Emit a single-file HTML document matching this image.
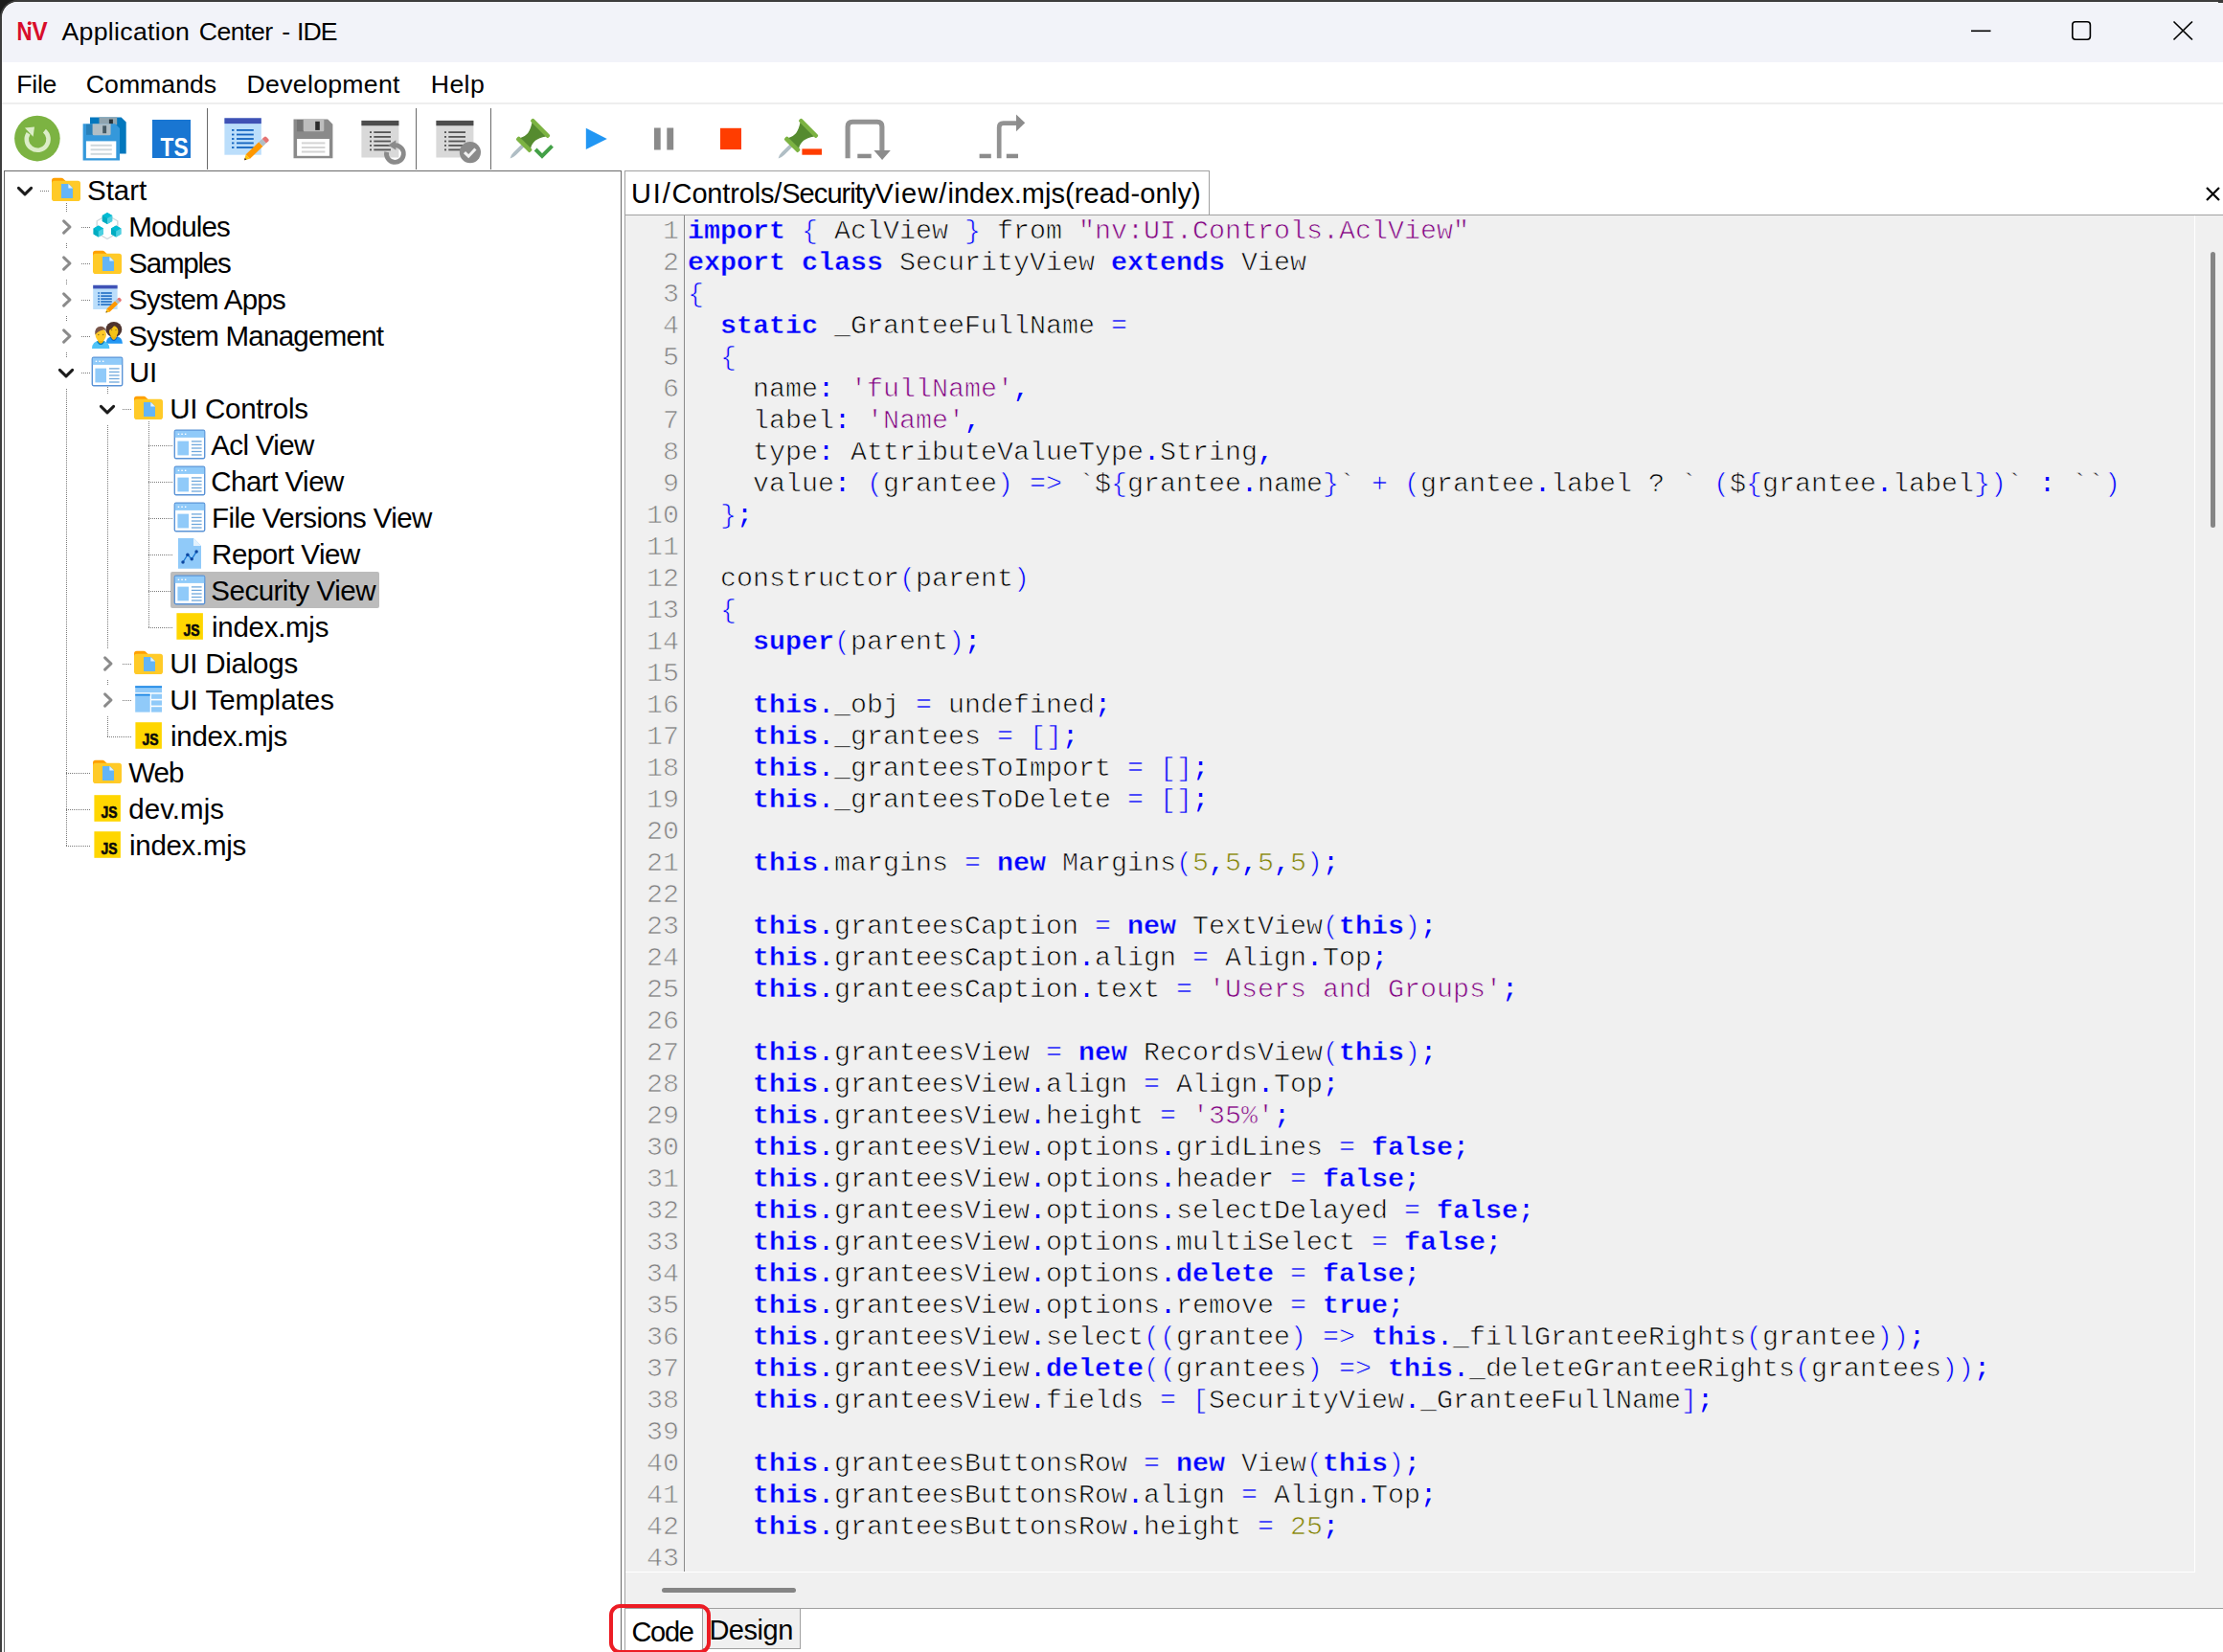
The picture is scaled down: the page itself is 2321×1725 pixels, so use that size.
<!DOCTYPE html>
<html lang="en"><head><meta charset="utf-8"><title>Application Center - IDE</title>
<style>
*{box-sizing:border-box;margin:0;padding:0}
html,body{width:2321px;height:1725px;overflow:hidden;background:#3a3a3a}
body{position:relative;font-family:"Liberation Sans",sans-serif;color:#000}
.a{position:absolute}
.t{position:absolute;white-space:pre;line-height:1}
svg{position:absolute;overflow:visible}
.tl{position:absolute;white-space:pre;font-size:29.5px;line-height:38px;height:38px}
.ln{position:absolute;left:654px;width:54.9px;text-align:right;-webkit-text-stroke:0.7px #f0f0f0;font-family:"Liberation Mono",monospace;font-size:28.33px;line-height:33px;height:33px;color:#808080;white-space:pre}
.cl{position:absolute;left:718px;-webkit-text-stroke:0.7px #f0f0f0;font-family:"Liberation Mono",monospace;font-size:28.33px;line-height:33px;height:33px;white-space:pre;color:#000}
.k{color:#0000ff;font-weight:bold;-webkit-text-stroke:0.35px #f0f0f0}
.p{color:#0000ff}
.d{color:#0000ff;-webkit-text-stroke:0}
.s{color:#800080}
.n{color:#808000}
</style></head><body>
<div class="a" style="left:0;top:0;width:24px;height:24px;background:#1c1c1c"></div>
<div class="a" style="left:0;top:0;width:2321px;height:1725px;background:#3d3d3d;border-top-left-radius:18.5px"></div>
<div class="a" style="left:2px;top:2.2px;width:2319px;height:1723px;background:#fff;border-top-left-radius:16.5px"></div>
<div class="a" style="left:2px;top:2.2px;width:2319px;height:62.8px;background:#f2f3f9;border-top-left-radius:16.5px"></div>
<div class="a" style="left:2316px;top:0;width:5px;height:3px;background:#3a3a3a"></div>
<svg style="left:14px;top:16px" width="40" height="32" viewBox="14 16 40 32"><g font-family="Liberation Sans, sans-serif" font-weight="bold" font-size="27.4" fill="#d80d2b"><text x="17.6" y="41.5" textLength="16" lengthAdjust="spacingAndGlyphs">N</text><rect x="28.4" y="19" width="6" height="9" fill="#f2f3f9"/><circle cx="30.8" cy="24.2" r="2.0"/><text x="33.2" y="41.5" textLength="16.4" lengthAdjust="spacingAndGlyphs">V</text></g></svg>
<div class="t" style="left:64.50px;top:20.4px;font-size:26.67px;letter-spacing:0.303px">Application</div>
<div class="t" style="left:207.70px;top:20.4px;font-size:26.67px;letter-spacing:-0.527px">Center</div>
<div class="t" style="left:294.20px;top:20.4px;font-size:26.67px;letter-spacing:0.000px">-</div>
<div class="t" style="left:310.02px;top:20.4px;font-size:26.67px;letter-spacing:-0.900px">IDE</div>
<svg style="left:2040px;top:10px" width="270" height="46" viewBox="2040 10 270 46" fill="none" stroke="#000" stroke-width="1.6"><path d="M2058 32.3h20.5"/><rect x="2163.8" y="22.8" width="18.6" height="18.4" rx="3.2"/><path d="M2269.5 22.5l19.5 19M2289 22.5l-19.5 19"/></svg>
<div class="t" style="left:17.3px;top:75.3px;font-size:26.67px;letter-spacing:-0.269px">File</div>
<div class="t" style="left:89.8px;top:75.3px;font-size:26.67px;letter-spacing:0.005px">Commands</div>
<div class="t" style="left:257.5px;top:75.3px;font-size:26.67px;letter-spacing:0.296px">Development</div>
<div class="t" style="left:449.8px;top:75.3px;font-size:26.67px;letter-spacing:0.362px">Help</div>
<div class="a" style="left:2px;top:107px;width:2319px;height:2px;background:#eeeeee"></div>
<div class="a" style="left:216px;top:113px;width:1px;height:64px;background:#6a6a6a"></div>
<div class="a" style="left:434px;top:113px;width:1px;height:64px;background:#6a6a6a"></div>
<div class="a" style="left:512px;top:113px;width:1px;height:64px;background:#6a6a6a"></div>
<svg style="left:0;top:108px" width="1100" height="72" viewBox="0 108 1100 72"><circle cx="38.9" cy="144.6" r="23.8" fill="#7cb342"/><path d="M46.4 136.6A11.4 11.4 0 1 1 29.6 139.2" fill="none" stroke="#dcedc8" stroke-width="4.6"/><path d="M25.9 133.6L36 132.5L34.6 142.8Z" fill="#dcedc8"/><path d="M94 122.4H126.6L131.7 127.5V160.5H94Z" fill="#0277bd"/><rect x="103.5" y="122.4" width="18.7" height="8" fill="#90a4ae"/><rect x="113.9" y="124.6" width="4" height="5" fill="#263238"/><path d="M86.6 129.3H120.2L125 134.1V167.4H86.6Z" fill="#3498db"/><rect x="90" y="129.8" width="7" height="11" fill="#2980b9"/><path d="M96.6 129.3H115.6V139.7Q115.6 141.2 114.1 141.2H98.1Q96.6 141.2 96.6 139.7Z" fill="#b0bec5"/><rect x="107.2" y="131.3" width="3.9" height="7.9" fill="#455a64"/><rect x="89.9" y="147.4" width="31.4" height="17.8" fill="#fff"/><rect x="94.6" y="150.8" width="22.2" height="2" fill="#cfd8dc"/><rect x="94.6" y="155.3" width="22.2" height="2" fill="#cfd8dc"/><rect x="94.6" y="159.8" width="22.2" height="2" fill="#cfd8dc"/><rect x="159" y="125" width="40" height="40" fill="#1976d2"/><text x="167.6" y="163" font-family="Liberation Sans, sans-serif" font-weight="bold" font-size="27.5" fill="#fff" textLength="29" lengthAdjust="spacingAndGlyphs">TS</text><rect x="234.4" y="123.3" width="38.4" height="38.4" fill="#bbdefb"/><rect x="234.4" y="123.3" width="38.4" height="5.8" fill="#3f51b5"/><rect x="242" y="135.0" width="2.4" height="1.8" fill="#1565c0"/><rect x="247" y="135.0" width="17.8" height="1.8" fill="#1565c0"/><rect x="242" y="139.6" width="2.4" height="1.8" fill="#1565c0"/><rect x="247" y="139.6" width="17.8" height="1.8" fill="#1565c0"/><rect x="242" y="144.1" width="2.4" height="1.8" fill="#1565c0"/><rect x="247" y="144.1" width="17.8" height="1.8" fill="#1565c0"/><rect x="242" y="148.5" width="2.4" height="1.8" fill="#1565c0"/><rect x="247" y="148.5" width="17.8" height="1.8" fill="#1565c0"/><rect x="242" y="153.1" width="2.4" height="1.8" fill="#1565c0"/><rect x="247" y="153.1" width="17.8" height="1.8" fill="#1565c0"/><g transform="translate(255,167.3) rotate(-43.79)"><path d="M0 0L5.36 -3.1V3.1Z" fill="#ffc107"/><path d="M0 0L2.25 -1.30V1.30Z" fill="#4e342e"/><rect x="5.36" y="-3.1" width="18.77" height="6.2" fill="#ff9800"/><rect x="24.14" y="-3.1" width="4.69" height="6.2" fill="#b0bec5"/><path d="M28.83 -3.1H32.02Q33.52 -3.1 33.52 -1.6V1.6Q33.52 3.1 32.02 3.1H28.83Z" fill="#e57373"/></g><path d="M306.5 124.5H342.2L347.4 129.7V165.2H306.5Z" fill="#8a8a8a"/><rect x="310" y="125" width="7" height="12.3" fill="#757575"/><path d="M316.7 124.5H338.3V135.8Q338.3 137.3 336.8 137.3H318.2Q316.7 137.3 316.7 135.8Z" fill="#bdbdbd"/><rect x="329.2" y="126.8" width="4.6" height="9.1" fill="#2b2b2b"/><rect x="310.1" y="145" width="33.8" height="17.8" fill="#fff"/><rect x="314.9" y="148.4" width="24.5" height="2" fill="#d4d4d4"/><rect x="314.9" y="153" width="24.5" height="2" fill="#d4d4d4"/><rect x="314.9" y="157.5" width="24.5" height="2" fill="#d4d4d4"/><rect x="377.4" y="125.9" width="39" height="38.6" fill="#d9d9d9"/><rect x="377.4" y="125.9" width="39" height="5.3" fill="#4d4d4d"/><rect x="386.0" y="137.2" width="2" height="1.8" fill="#555"/><rect x="390.3" y="137.2" width="17.7" height="1.8" fill="#555"/><rect x="386.0" y="142.0" width="2" height="1.8" fill="#555"/><rect x="390.3" y="142.0" width="17.7" height="1.8" fill="#555"/><rect x="386.0" y="146.6" width="2" height="1.8" fill="#555"/><rect x="390.3" y="146.6" width="17.7" height="1.8" fill="#555"/><rect x="386.0" y="151.0" width="2" height="1.8" fill="#555"/><rect x="390.3" y="151.0" width="17.7" height="1.8" fill="#555"/><rect x="386.0" y="155.5" width="2" height="1.8" fill="#555"/><rect x="390.3" y="155.5" width="17.7" height="1.8" fill="#555"/><path d="M413 151.6A8.9 8.9 0 1 1 403.7 158.7" fill="none" stroke="#8a8a8a" stroke-width="4.9"/><path d="M405.3 151.5L413.4 146.2V156.8Z" fill="#8a8a8a"/><rect x="455.4" y="125.9" width="39" height="38.6" fill="#d9d9d9"/><rect x="455.4" y="125.9" width="39" height="5.3" fill="#4d4d4d"/><rect x="464.0" y="137.2" width="2" height="1.8" fill="#555"/><rect x="468.3" y="137.2" width="17.7" height="1.8" fill="#555"/><rect x="464.0" y="142.0" width="2" height="1.8" fill="#555"/><rect x="468.3" y="142.0" width="17.7" height="1.8" fill="#555"/><rect x="464.0" y="146.6" width="2" height="1.8" fill="#555"/><rect x="468.3" y="146.6" width="17.7" height="1.8" fill="#555"/><rect x="464.0" y="151.0" width="2" height="1.8" fill="#555"/><rect x="468.3" y="151.0" width="17.7" height="1.8" fill="#555"/><rect x="464.0" y="155.5" width="2" height="1.8" fill="#555"/><rect x="468.3" y="155.5" width="17.7" height="1.8" fill="#555"/><circle cx="490.9" cy="159.1" r="11.1" fill="#8a8a8a"/><path d="M485 159.2L489.2 163.2L496.4 155.4" fill="none" stroke="#f2f2f2" stroke-width="3"/><g transform="translate(532.6,165.4) rotate(-45)"><path d="M0 0Q3 -1.9 7 -1.9H21V1.9H7Q3 1.9 0 0Z" fill="#b0bec5"/><rect x="18.2" y="-10.2" width="4.8" height="20.4" rx="1.6" fill="#7cb342"/><path d="M22.8 -7.6C29 -4.2 34 -4.6 42.8 -10.4V10.4C34 4.6 29 4.2 22.8 7.6Z" fill="#558b2f"/><rect x="42.4" y="-13" width="4.3" height="26" rx="1.6" fill="#7cb342"/></g><path d="M559.1 156L566 162.9L576.5 152.3" fill="none" stroke="#43a047" stroke-width="4"/><path d="M611.8 133.8L633.8 144.9L611.8 156Z" fill="#2196f3"/><rect x="683" y="133.5" width="6.7" height="23" fill="#8a8a8a"/><rect x="696.3" y="133.5" width="6.9" height="23" fill="#8a8a8a"/><rect x="752" y="133.8" width="22" height="22.3" fill="#ff3d00"/><g transform="translate(812.6,165.4) rotate(-45)"><path d="M0 0Q3 -1.9 7 -1.9H21V1.9H7Q3 1.9 0 0Z" fill="#b0bec5"/><rect x="18.2" y="-10.2" width="4.8" height="20.4" rx="1.6" fill="#7cb342"/><path d="M22.8 -7.6C29 -4.2 34 -4.6 42.8 -10.4V10.4C34 4.6 29 4.2 22.8 7.6Z" fill="#558b2f"/><rect x="42.4" y="-13" width="4.3" height="26" rx="1.6" fill="#7cb342"/></g><rect x="837.4" y="155.4" width="20.6" height="6.3" fill="#ff3d00"/><path d="M885.1 165.2V132.3Q885.1 127.3 890.1 127.3H915.9Q920.9 127.3 920.9 132.3V158" fill="none" stroke="#929292" stroke-width="5.1"/><path d="M912.4 157H929.8L921.1 167Z" fill="#8c8c8c"/><rect x="895.3" y="160.7" width="14.4" height="4.5" fill="#8c8c8c"/><rect x="1022.6" y="160.7" width="12.2" height="4.5" fill="#8c8c8c"/><rect x="1050.8" y="160.7" width="12.2" height="4.5" fill="#8c8c8c"/><path d="M1043.2 165.2V133Q1043.2 128.6 1047.6 128.6H1062" fill="none" stroke="#929292" stroke-width="4.7"/><path d="M1061 119.4L1070.2 128.3L1061 137.2Z" fill="#8c8c8c"/></svg>
<div class="a" style="left:4px;top:178px;width:645px;height:1560px;border:1px solid #696969;background:#fff"></div>
<svg style="left:0;top:0" width="660" height="1725" viewBox="0 0 660 1725" stroke="#7a7a7a" stroke-width="1" stroke-dasharray="1 1" fill="none" shape-rendering="crispEdges"><path d="M69.5 212V883"/><path d="M112.5 404V769"/><path d="M155.5 440V655"/><path d="M42 199.5H51"/><path d="M85 237.5H94"/><path d="M85 275.5H94"/><path d="M85 313.5H94"/><path d="M85 351.5H94"/><path d="M85 389.5H94"/><path d="M128 427.5H137"/><path d="M155 465.5H180"/><path d="M155 503.5H180"/><path d="M155 541.5H180"/><path d="M155 579.5H180"/><path d="M155 617.5H180"/><path d="M155 655.5H180"/><path d="M128 693.5H137"/><path d="M128 731.5H137"/><path d="M112 769.5H137"/><path d="M69 807.5H94"/><path d="M69 845.5H94"/><path d="M69 883.5H94"/></svg>
<div class="a" style="left:178px;top:597px;width:218px;height:38px;background:#bcbcbc;border-radius:2px"></div>
<svg style="left:14px;top:181px" width="24" height="36" viewBox="-12 -18 24 36"><rect x="-10" y="-16" width="20" height="32" fill="#fff"/><path d="M-6.6 -2.6L0 3.8L6.6 -2.6" fill="none" stroke="#1b1b1b" stroke-width="3" stroke-linecap="round" stroke-linejoin="round"/></svg>
<svg style="left:52px;top:180px" width="36" height="38" viewBox="-2 -19 36 38"><path d="M0 -6V-10.4Q0 -13.2 2.8 -13.2H10.2Q11.3 -13.2 12 -12.5L14.6 -9.9V-6Z" fill="#ffa000"/><rect x="0" y="-10.2" width="30" height="21.2" rx="2.8" fill="#ffca28"/><path d="M10 -7H17.8L22 -2.8V8H10Z" fill="#64b5f6"/><path d="M17.4 -7L22 -2.4H17.4Z" fill="#e3f2fd"/></svg>
<div class="tl" style="left:91.1px;top:180px;letter-spacing:-0.080px">Start</div>
<svg style="left:57px;top:219px" width="24" height="36" viewBox="-12 -18 24 36"><rect x="-10" y="-16" width="20" height="32" fill="#fff"/><path d="M-2.4 -6.2L4 0L-2.4 6.2" fill="none" stroke="#8b8b8b" stroke-width="3" stroke-linecap="round" stroke-linejoin="round"/></svg>
<svg style="left:95px;top:218px" width="36" height="38" viewBox="-2 -19 36 38"><path d="M15 -12.5L25.8 -6.25V6.25L15 12.5L4.2 6.25V-6.25Z" fill="none" stroke="#cfd8dc" stroke-width="1.4" stroke-linejoin="round"/><path d="M15 -15L20.2 -12.0V-6.0L15 -3L9.8 -6.0V-12.0Z" fill="#1fb8cf"/><path d="M15 -15L20.2 -12.0L15 -9L9.8 -12.0Z" fill="#00bcd4"/><path d="M9.8 -12.0L15 -9V-3L9.8 -6.0Z" fill="#00acc1"/><path d="M20.2 -12.0L15 -9V-3L20.2 -6.0Z" fill="#4dd0e1"/><path d="M5.8 -1.4000000000000004L11.0 1.5999999999999996V7.6L5.8 10.6L0.5999999999999996 7.6V1.5999999999999996Z" fill="#1fb8cf"/><path d="M5.8 -1.4000000000000004L11.0 1.5999999999999996L5.8 4.6L0.5999999999999996 1.5999999999999996Z" fill="#00bcd4"/><path d="M0.5999999999999996 1.5999999999999996L5.8 4.6V10.6L0.5999999999999996 7.6Z" fill="#00acc1"/><path d="M11.0 1.5999999999999996L5.8 4.6V10.6L11.0 7.6Z" fill="#4dd0e1"/><path d="M24.2 -1.4000000000000004L29.4 1.5999999999999996V7.6L24.2 10.6L19.0 7.6V1.5999999999999996Z" fill="#1fb8cf"/><path d="M24.2 -1.4000000000000004L29.4 1.5999999999999996L24.2 4.6L19.0 1.5999999999999996Z" fill="#00bcd4"/><path d="M19.0 1.5999999999999996L24.2 4.6V10.6L19.0 7.6Z" fill="#00acc1"/><path d="M29.4 1.5999999999999996L24.2 4.6V10.6L29.4 7.6Z" fill="#4dd0e1"/></svg>
<div class="tl" style="left:134.2px;top:218px;letter-spacing:-0.815px">Modules</div>
<svg style="left:57px;top:257px" width="24" height="36" viewBox="-12 -18 24 36"><rect x="-10" y="-16" width="20" height="32" fill="#fff"/><path d="M-2.4 -6.2L4 0L-2.4 6.2" fill="none" stroke="#8b8b8b" stroke-width="3" stroke-linecap="round" stroke-linejoin="round"/></svg>
<svg style="left:95px;top:256px" width="36" height="38" viewBox="-2 -19 36 38"><path d="M0 -6V-10.4Q0 -13.2 2.8 -13.2H10.2Q11.3 -13.2 12 -12.5L14.6 -9.9V-6Z" fill="#ffa000"/><rect x="0" y="-10.2" width="30" height="21.2" rx="2.8" fill="#ffca28"/><path d="M10 -7H17.8L22 -2.8V8H10Z" fill="#64b5f6"/><path d="M17.4 -7L22 -2.4H17.4Z" fill="#e3f2fd"/></svg>
<div class="tl" style="left:134.2px;top:256px;letter-spacing:-1.196px">Samples</div>
<svg style="left:57px;top:295px" width="24" height="36" viewBox="-12 -18 24 36"><rect x="-10" y="-16" width="20" height="32" fill="#fff"/><path d="M-2.4 -6.2L4 0L-2.4 6.2" fill="none" stroke="#8b8b8b" stroke-width="3" stroke-linecap="round" stroke-linejoin="round"/></svg>
<svg style="left:95px;top:294px" width="36" height="38" viewBox="-2 -19 36 38"><rect x="0.2" y="-15.2" width="25.4" height="25.2" fill="#bbdefb"/><rect x="0.2" y="-15.2" width="25.4" height="3.6" fill="#3f51b5"/><rect x="5.3" y="-7.75" width="1.7" height="1.5" fill="#1565c0"/><rect x="8.2" y="-7.75" width="11.6" height="1.5" fill="#1565c0"/><rect x="5.3" y="-4.65" width="1.7" height="1.5" fill="#1565c0"/><rect x="8.2" y="-4.65" width="11.6" height="1.5" fill="#1565c0"/><rect x="5.3" y="-1.65" width="1.7" height="1.5" fill="#1565c0"/><rect x="8.2" y="-1.65" width="11.6" height="1.5" fill="#1565c0"/><rect x="5.3" y="1.25" width="1.7" height="1.5" fill="#1565c0"/><rect x="8.2" y="1.25" width="11.6" height="1.5" fill="#1565c0"/><rect x="5.3" y="4.25" width="1.7" height="1.5" fill="#1565c0"/><rect x="8.2" y="4.25" width="11.6" height="1.5" fill="#1565c0"/><g transform="translate(13.5,13.4) rotate(-43.47)"><path d="M0 0L3.40 -2.2V2.2Z" fill="#ffc107"/><path d="M0 0L1.43 -0.92V0.92Z" fill="#4e342e"/><rect x="3.40" y="-2.2" width="11.88" height="4.4" fill="#ff9800"/><rect x="15.28" y="-2.2" width="2.97" height="4.4" fill="#b0bec5"/><path d="M18.25 -2.2H19.72Q21.22 -2.2 21.22 -0.7000000000000002V0.7000000000000002Q21.22 2.2 19.72 2.2H18.25Z" fill="#e57373"/></g></svg>
<div class="tl" style="left:134.2px;top:294px;letter-spacing:-0.769px">System Apps</div>
<svg style="left:57px;top:333px" width="24" height="36" viewBox="-12 -18 24 36"><rect x="-10" y="-16" width="20" height="32" fill="#fff"/><path d="M-2.4 -6.2L4 0L-2.4 6.2" fill="none" stroke="#8b8b8b" stroke-width="3" stroke-linecap="round" stroke-linejoin="round"/></svg>
<svg style="left:95px;top:332px" width="36" height="38" viewBox="-2 -19 36 38"><path d="M13.6 7.8Q13.8 0.3 21 0.3H23.6Q30.8 0.3 31 7.8Z" fill="#2196f3"/><path d="M17.6 0.6Q21.8 9.6 26 0.6Z" fill="#0d62c4"/><ellipse cx="21.9" cy="-7" rx="8.4" ry="8.1" fill="#4e342e"/><path d="M18.6 -2H25V0.6Q21.8 7.2 18.6 0.6Z" fill="#eeb50c"/><ellipse cx="21.7" cy="-5" rx="4.7" ry="5.8" fill="#f6c417"/><path d="M16.6 -6Q17 -11.4 22.6 -11.6Q19.6 -7 16.6 -6Z" fill="#4e342e"/><circle cx="19.6" cy="-6.4" r="0.7" fill="#8d6e1f"/><circle cx="24" cy="-6.4" r="0.7" fill="#8d6e1f"/><path d="M-1 12.9Q-0.6 4.9 7 4.9H9.4Q16.9 4.9 17.3 12.9Z" fill="#4fc3f7"/><path d="M3.9 5.2Q8.2 13 12.5 5.2Z" fill="#0277bd"/><path d="M5.1 1H11.4V5Q8.2 10.6 5.1 5Z" fill="#f4b400"/><ellipse cx="8.25" cy="-1.4" rx="5.7" ry="6.4" fill="#ffca28"/><path d="M2.3 -1.6Q1.4 -9.6 8 -10.2Q13.6 -10.4 14.2 -3.4Q13.6 -6.4 11.4 -6.8Q6 -6 2.3 -1.6Z" fill="#795548"/><circle cx="5.8" cy="-1.6" r="0.75" fill="#8d6e1f"/><circle cx="10.6" cy="-1.6" r="0.75" fill="#8d6e1f"/></svg>
<div class="tl" style="left:134.2px;top:332px;letter-spacing:-0.743px">System Management</div>
<svg style="left:57px;top:371px" width="24" height="36" viewBox="-12 -18 24 36"><rect x="-10" y="-16" width="20" height="32" fill="#fff"/><path d="M-6.6 -2.6L0 3.8L6.6 -2.6" fill="none" stroke="#1b1b1b" stroke-width="3" stroke-linecap="round" stroke-linejoin="round"/></svg>
<svg style="left:95px;top:370px" width="36" height="38" viewBox="-2 -19 36 38"><rect x="-0.7" y="-15.7" width="31.4" height="29.4" rx="1.4" fill="#fff" stroke="#5a93d6" stroke-width="1.4"/><rect x="-0.3" y="-15.3" width="30.6" height="7.2" fill="#90caf9"/><rect x="2.7" y="-12.4" width="1.5" height="1.4" fill="#fff"/><rect x="6.3" y="-12.4" width="1.5" height="1.4" fill="#fff"/><rect x="9.9" y="-12.4" width="1.5" height="1.4" fill="#fff"/><rect x="2.4" y="-4.4" width="11.6" height="14.8" fill="#90caf9"/><rect x="16.9" y="-4.75" width="10.7" height="1.3" fill="#6fa8dc"/><rect x="16.9" y="-1.25" width="10.7" height="1.3" fill="#6fa8dc"/><rect x="16.9" y="2.35" width="10.7" height="1.3" fill="#6fa8dc"/><rect x="16.9" y="5.85" width="10.7" height="1.3" fill="#6fa8dc"/><rect x="16.9" y="9.35" width="10.7" height="1.3" fill="#6fa8dc"/></svg>
<div class="tl" style="left:135.1px;top:370px;letter-spacing:-0.300px">UI</div>
<svg style="left:100px;top:409px" width="24" height="36" viewBox="-12 -18 24 36"><rect x="-10" y="-16" width="20" height="32" fill="#fff"/><path d="M-6.6 -2.6L0 3.8L6.6 -2.6" fill="none" stroke="#1b1b1b" stroke-width="3" stroke-linecap="round" stroke-linejoin="round"/></svg>
<svg style="left:138px;top:408px" width="36" height="38" viewBox="-2 -19 36 38"><path d="M0 -6V-10.4Q0 -13.2 2.8 -13.2H10.2Q11.3 -13.2 12 -12.5L14.6 -9.9V-6Z" fill="#ffa000"/><rect x="0" y="-10.2" width="30" height="21.2" rx="2.8" fill="#ffca28"/><path d="M10 -7H17.8L22 -2.8V8H10Z" fill="#64b5f6"/><path d="M17.4 -7L22 -2.4H17.4Z" fill="#e3f2fd"/></svg>
<div class="tl" style="left:177.2px;top:408px;letter-spacing:-0.277px">UI Controls</div>
<svg style="left:181px;top:446px" width="36" height="38" viewBox="-2 -19 36 38"><rect x="-0.7" y="-15.7" width="31.4" height="29.4" rx="1.4" fill="#fff" stroke="#5a93d6" stroke-width="1.4"/><rect x="-0.3" y="-15.3" width="30.6" height="7.2" fill="#90caf9"/><rect x="2.7" y="-12.4" width="1.5" height="1.4" fill="#fff"/><rect x="6.3" y="-12.4" width="1.5" height="1.4" fill="#fff"/><rect x="9.9" y="-12.4" width="1.5" height="1.4" fill="#fff"/><rect x="2.4" y="-4.4" width="11.6" height="14.8" fill="#90caf9"/><rect x="16.9" y="-4.75" width="10.7" height="1.3" fill="#6fa8dc"/><rect x="16.9" y="-1.25" width="10.7" height="1.3" fill="#6fa8dc"/><rect x="16.9" y="2.35" width="10.7" height="1.3" fill="#6fa8dc"/><rect x="16.9" y="5.85" width="10.7" height="1.3" fill="#6fa8dc"/><rect x="16.9" y="9.35" width="10.7" height="1.3" fill="#6fa8dc"/></svg>
<div class="tl" style="left:220.3px;top:446px;letter-spacing:-0.661px">Acl View</div>
<svg style="left:181px;top:484px" width="36" height="38" viewBox="-2 -19 36 38"><rect x="-0.7" y="-15.7" width="31.4" height="29.4" rx="1.4" fill="#fff" stroke="#5a93d6" stroke-width="1.4"/><rect x="-0.3" y="-15.3" width="30.6" height="7.2" fill="#90caf9"/><rect x="2.7" y="-12.4" width="1.5" height="1.4" fill="#fff"/><rect x="6.3" y="-12.4" width="1.5" height="1.4" fill="#fff"/><rect x="9.9" y="-12.4" width="1.5" height="1.4" fill="#fff"/><rect x="2.4" y="-4.4" width="11.6" height="14.8" fill="#90caf9"/><rect x="16.9" y="-4.75" width="10.7" height="1.3" fill="#6fa8dc"/><rect x="16.9" y="-1.25" width="10.7" height="1.3" fill="#6fa8dc"/><rect x="16.9" y="2.35" width="10.7" height="1.3" fill="#6fa8dc"/><rect x="16.9" y="5.85" width="10.7" height="1.3" fill="#6fa8dc"/><rect x="16.9" y="9.35" width="10.7" height="1.3" fill="#6fa8dc"/></svg>
<div class="tl" style="left:220.3px;top:484px;letter-spacing:-0.524px">Chart View</div>
<svg style="left:181px;top:522px" width="36" height="38" viewBox="-2 -19 36 38"><rect x="-0.7" y="-15.7" width="31.4" height="29.4" rx="1.4" fill="#fff" stroke="#5a93d6" stroke-width="1.4"/><rect x="-0.3" y="-15.3" width="30.6" height="7.2" fill="#90caf9"/><rect x="2.7" y="-12.4" width="1.5" height="1.4" fill="#fff"/><rect x="6.3" y="-12.4" width="1.5" height="1.4" fill="#fff"/><rect x="9.9" y="-12.4" width="1.5" height="1.4" fill="#fff"/><rect x="2.4" y="-4.4" width="11.6" height="14.8" fill="#90caf9"/><rect x="16.9" y="-4.75" width="10.7" height="1.3" fill="#6fa8dc"/><rect x="16.9" y="-1.25" width="10.7" height="1.3" fill="#6fa8dc"/><rect x="16.9" y="2.35" width="10.7" height="1.3" fill="#6fa8dc"/><rect x="16.9" y="5.85" width="10.7" height="1.3" fill="#6fa8dc"/><rect x="16.9" y="9.35" width="10.7" height="1.3" fill="#6fa8dc"/></svg>
<div class="tl" style="left:221.1px;top:522px;letter-spacing:-0.599px">File Versions View</div>
<svg style="left:181px;top:560px" width="36" height="38" viewBox="-2 -19 36 38"><path d="M3 -17H19L27 -9V14.7H3Z" fill="#90caf9"/><path d="M19 -17L27 -9H19Z" fill="#e3f2fd"/><path d="M8 8L12.9 0.2L17.2 4.8L22.1 -2.9" fill="none" stroke="#1976d2" stroke-width="1.3"/><circle cx="8" cy="8" r="1.75" fill="#0d47a1"/><circle cx="12.9" cy="0.2" r="1.75" fill="#0d47a1"/><circle cx="17.2" cy="4.8" r="1.75" fill="#0d47a1"/><circle cx="22.1" cy="-2.9" r="1.75" fill="#0d47a1"/></svg>
<div class="tl" style="left:221.1px;top:560px;letter-spacing:-0.504px">Report View</div>
<svg style="left:181px;top:598px" width="36" height="38" viewBox="-2 -19 36 38"><rect x="-0.7" y="-15.7" width="31.4" height="29.4" rx="1.4" fill="#fff" stroke="#5a93d6" stroke-width="1.4"/><rect x="-0.3" y="-15.3" width="30.6" height="7.2" fill="#90caf9"/><rect x="2.7" y="-12.4" width="1.5" height="1.4" fill="#fff"/><rect x="6.3" y="-12.4" width="1.5" height="1.4" fill="#fff"/><rect x="9.9" y="-12.4" width="1.5" height="1.4" fill="#fff"/><rect x="2.4" y="-4.4" width="11.6" height="14.8" fill="#90caf9"/><rect x="16.9" y="-4.75" width="10.7" height="1.3" fill="#6fa8dc"/><rect x="16.9" y="-1.25" width="10.7" height="1.3" fill="#6fa8dc"/><rect x="16.9" y="2.35" width="10.7" height="1.3" fill="#6fa8dc"/><rect x="16.9" y="5.85" width="10.7" height="1.3" fill="#6fa8dc"/><rect x="16.9" y="9.35" width="10.7" height="1.3" fill="#6fa8dc"/></svg>
<div class="tl" style="left:220.3px;top:598px;letter-spacing:-0.498px">Security View</div>
<svg style="left:181px;top:636px" width="36" height="38" viewBox="-2 -19 36 38"><rect x="1.4" y="-14.8" width="27.5" height="27.6" fill="#ffd600"/><text x="8.6" y="9.2" font-family="Liberation Sans, sans-serif" font-weight="bold" font-size="16.6" fill="#0a0a0a" stroke="#0a0a0a" stroke-width="0.6" textLength="17" lengthAdjust="spacingAndGlyphs">JS</text></svg>
<div class="tl" style="left:221.1px;top:636px;letter-spacing:-0.289px">index.mjs</div>
<svg style="left:100px;top:675px" width="24" height="36" viewBox="-12 -18 24 36"><rect x="-10" y="-16" width="20" height="32" fill="#fff"/><path d="M-2.4 -6.2L4 0L-2.4 6.2" fill="none" stroke="#8b8b8b" stroke-width="3" stroke-linecap="round" stroke-linejoin="round"/></svg>
<svg style="left:138px;top:674px" width="36" height="38" viewBox="-2 -19 36 38"><path d="M0 -6V-10.4Q0 -13.2 2.8 -13.2H10.2Q11.3 -13.2 12 -12.5L14.6 -9.9V-6Z" fill="#ffa000"/><rect x="0" y="-10.2" width="30" height="21.2" rx="2.8" fill="#ffca28"/><path d="M10 -7H17.8L22 -2.8V8H10Z" fill="#64b5f6"/><path d="M17.4 -7L22 -2.4H17.4Z" fill="#e3f2fd"/></svg>
<div class="tl" style="left:177.2px;top:674px;letter-spacing:-0.228px">UI Dialogs</div>
<svg style="left:100px;top:713px" width="24" height="36" viewBox="-12 -18 24 36"><rect x="-10" y="-16" width="20" height="32" fill="#fff"/><path d="M-2.4 -6.2L4 0L-2.4 6.2" fill="none" stroke="#8b8b8b" stroke-width="3" stroke-linecap="round" stroke-linejoin="round"/></svg>
<svg style="left:138px;top:712px" width="36" height="38" viewBox="-2 -19 36 38"><rect x="1.2" y="-14.7" width="27.8" height="6.9" fill="#90caf9"/><rect x="1.2" y="-14.7" width="27.8" height="1.8" fill="#1e88e5"/><rect x="1.2" y="-6.3" width="15.5" height="18.9" fill="#90caf9"/><rect x="1.2" y="-6.3" width="15.5" height="1.8" fill="#1e88e5"/><rect x="18" y="-6.3" width="11" height="5.1" fill="#90caf9"/><rect x="18" y="0.4" width="11" height="5.2" fill="#90caf9"/><rect x="18" y="7.2" width="11" height="5.4" fill="#90caf9"/></svg>
<div class="tl" style="left:177.2px;top:712px;letter-spacing:0.016px">UI Templates</div>
<svg style="left:138px;top:750px" width="36" height="38" viewBox="-2 -19 36 38"><rect x="1.4" y="-14.8" width="27.5" height="27.6" fill="#ffd600"/><text x="8.6" y="9.2" font-family="Liberation Sans, sans-serif" font-weight="bold" font-size="16.6" fill="#0a0a0a" stroke="#0a0a0a" stroke-width="0.6" textLength="17" lengthAdjust="spacingAndGlyphs">JS</text></svg>
<div class="tl" style="left:178.1px;top:750px;letter-spacing:-0.300px">index.mjs</div>
<svg style="left:95px;top:788px" width="36" height="38" viewBox="-2 -19 36 38"><path d="M0 -6V-10.4Q0 -13.2 2.8 -13.2H10.2Q11.3 -13.2 12 -12.5L14.6 -9.9V-6Z" fill="#ffa000"/><rect x="0" y="-10.2" width="30" height="21.2" rx="2.8" fill="#ffca28"/><path d="M10 -7H17.8L22 -2.8V8H10Z" fill="#64b5f6"/><path d="M17.4 -7L22 -2.4H17.4Z" fill="#e3f2fd"/></svg>
<div class="tl" style="left:134.2px;top:788px;letter-spacing:-0.908px">Web</div>
<svg style="left:95px;top:826px" width="36" height="38" viewBox="-2 -19 36 38"><rect x="1.4" y="-14.8" width="27.5" height="27.6" fill="#ffd600"/><text x="8.6" y="9.2" font-family="Liberation Sans, sans-serif" font-weight="bold" font-size="16.6" fill="#0a0a0a" stroke="#0a0a0a" stroke-width="0.6" textLength="17" lengthAdjust="spacingAndGlyphs">JS</text></svg>
<div class="tl" style="left:134.2px;top:826px;letter-spacing:0.065px">dev.mjs</div>
<svg style="left:95px;top:864px" width="36" height="38" viewBox="-2 -19 36 38"><rect x="1.4" y="-14.8" width="27.5" height="27.6" fill="#ffd600"/><text x="8.6" y="9.2" font-family="Liberation Sans, sans-serif" font-weight="bold" font-size="16.6" fill="#0a0a0a" stroke="#0a0a0a" stroke-width="0.6" textLength="17" lengthAdjust="spacingAndGlyphs">JS</text></svg>
<div class="tl" style="left:135.1px;top:864px;letter-spacing:-0.311px">index.mjs</div>
<div class="a" style="left:652px;top:178px;width:611px;height:47px;border:1px solid #a0a0a0;border-bottom:none;background:#fff"></div>
<div class="t" style="left:658.9px;top:188px;font-size:29px;letter-spacing:1.881px">UI/</div>
<div class="t" style="left:701.6px;top:188px;font-size:29px;letter-spacing:-0.160px">Controls/</div>
<div class="t" style="left:816.2px;top:188px;font-size:29px;letter-spacing:-0.920px">Security</div>
<div class="t" style="left:913.6px;top:188px;font-size:29px;letter-spacing:1.102px">View/</div>
<div class="t" style="left:989.5px;top:188px;font-size:29px;letter-spacing:-0.010px">index.mjs</div>
<div class="t" style="left:1111.9px;top:188px;font-size:29px;letter-spacing:0.162px">(read-only)</div>
<svg style="left:2300px;top:192px" width="21" height="21" viewBox="2300 192 21 21"><path d="M2304 196l13 13M2317 196l-13 13" stroke="#000" stroke-width="2.2" fill="none"/></svg>
<div class="a" style="left:652px;top:224px;width:1680px;height:1456px;border:1px solid #a0a0a0;background:#f0f0f0"></div>
<div class="a" style="left:714px;top:225px;width:1px;height:1416px;background:#8a8a8a"></div>
<div class="a" style="left:2291px;top:225px;width:1px;height:1417px;background:#fff"></div>
<div class="a" style="left:653px;top:1641px;width:1639px;height:1px;background:#fff"></div>
<div class="a" style="left:2308px;top:263px;width:5px;height:288px;background:#858585;border-radius:2.5px"></div>
<div class="a" style="left:691px;top:1658px;width:140px;height:5px;background:#858585;border-radius:2.5px"></div>
<div class="ln" style="top:224.6px">1</div>
<div class="cl" style="top:224.6px"><span class="k">import</span> <span class="p">{</span> AclView <span class="p">}</span> from <span class="s">"nv:UI.Controls.AclView"</span></div>
<div class="ln" style="top:257.6px">2</div>
<div class="cl" style="top:257.6px"><span class="k">export</span> <span class="k">class</span> SecurityView <span class="k">extends</span> View</div>
<div class="ln" style="top:290.6px">3</div>
<div class="cl" style="top:290.6px"><span class="p">{</span></div>
<div class="ln" style="top:323.6px">4</div>
<div class="cl" style="top:323.6px">  <span class="k">static</span> _GranteeFullName <span class="p">=</span></div>
<div class="ln" style="top:356.6px">5</div>
<div class="cl" style="top:356.6px">  <span class="p">{</span></div>
<div class="ln" style="top:389.6px">6</div>
<div class="cl" style="top:389.6px">    name<span class="d">:</span> <span class="s">'fullName'</span><span class="d">,</span></div>
<div class="ln" style="top:422.6px">7</div>
<div class="cl" style="top:422.6px">    label<span class="d">:</span> <span class="s">'Name'</span><span class="d">,</span></div>
<div class="ln" style="top:455.6px">8</div>
<div class="cl" style="top:455.6px">    type<span class="d">:</span> AttributeValueType<span class="d">.</span>String<span class="d">,</span></div>
<div class="ln" style="top:488.6px">9</div>
<div class="cl" style="top:488.6px">    value<span class="d">:</span> <span class="p">(</span>grantee<span class="p">)</span> <span class="p">=</span><span class="p">&gt;</span> `$<span class="p">{</span>grantee<span class="d">.</span>name<span class="p">}</span>` <span class="p">+</span> <span class="p">(</span>grantee<span class="d">.</span>label ? ` <span class="p">(</span>$<span class="p">{</span>grantee<span class="d">.</span>label<span class="p">}</span><span class="p">)</span>` <span class="d">:</span> ``<span class="p">)</span></div>
<div class="ln" style="top:521.6px">10</div>
<div class="cl" style="top:521.6px">  <span class="p">}</span><span class="d">;</span></div>
<div class="ln" style="top:554.6px">11</div>
<div class="ln" style="top:587.6px">12</div>
<div class="cl" style="top:587.6px">  constructor<span class="p">(</span>parent<span class="p">)</span></div>
<div class="ln" style="top:620.6px">13</div>
<div class="cl" style="top:620.6px">  <span class="p">{</span></div>
<div class="ln" style="top:653.6px">14</div>
<div class="cl" style="top:653.6px">    <span class="k">super</span><span class="p">(</span>parent<span class="p">)</span><span class="d">;</span></div>
<div class="ln" style="top:686.6px">15</div>
<div class="ln" style="top:719.6px">16</div>
<div class="cl" style="top:719.6px">    <span class="k">this</span><span class="d">.</span>_obj <span class="p">=</span> undefined<span class="d">;</span></div>
<div class="ln" style="top:752.6px">17</div>
<div class="cl" style="top:752.6px">    <span class="k">this</span><span class="d">.</span>_grantees <span class="p">=</span> <span class="p">[</span><span class="p">]</span><span class="d">;</span></div>
<div class="ln" style="top:785.6px">18</div>
<div class="cl" style="top:785.6px">    <span class="k">this</span><span class="d">.</span>_granteesToImport <span class="p">=</span> <span class="p">[</span><span class="p">]</span><span class="d">;</span></div>
<div class="ln" style="top:818.6px">19</div>
<div class="cl" style="top:818.6px">    <span class="k">this</span><span class="d">.</span>_granteesToDelete <span class="p">=</span> <span class="p">[</span><span class="p">]</span><span class="d">;</span></div>
<div class="ln" style="top:851.6px">20</div>
<div class="ln" style="top:884.6px">21</div>
<div class="cl" style="top:884.6px">    <span class="k">this</span><span class="d">.</span>margins <span class="p">=</span> <span class="k">new</span> Margins<span class="p">(</span><span class="n">5</span><span class="d">,</span><span class="n">5</span><span class="d">,</span><span class="n">5</span><span class="d">,</span><span class="n">5</span><span class="p">)</span><span class="d">;</span></div>
<div class="ln" style="top:917.6px">22</div>
<div class="ln" style="top:950.6px">23</div>
<div class="cl" style="top:950.6px">    <span class="k">this</span><span class="d">.</span>granteesCaption <span class="p">=</span> <span class="k">new</span> TextView<span class="p">(</span><span class="k">this</span><span class="p">)</span><span class="d">;</span></div>
<div class="ln" style="top:983.6px">24</div>
<div class="cl" style="top:983.6px">    <span class="k">this</span><span class="d">.</span>granteesCaption<span class="d">.</span>align <span class="p">=</span> Align<span class="d">.</span>Top<span class="d">;</span></div>
<div class="ln" style="top:1016.6px">25</div>
<div class="cl" style="top:1016.6px">    <span class="k">this</span><span class="d">.</span>granteesCaption<span class="d">.</span>text <span class="p">=</span> <span class="s">'Users and Groups'</span><span class="d">;</span></div>
<div class="ln" style="top:1049.6px">26</div>
<div class="ln" style="top:1082.6px">27</div>
<div class="cl" style="top:1082.6px">    <span class="k">this</span><span class="d">.</span>granteesView <span class="p">=</span> <span class="k">new</span> RecordsView<span class="p">(</span><span class="k">this</span><span class="p">)</span><span class="d">;</span></div>
<div class="ln" style="top:1115.6px">28</div>
<div class="cl" style="top:1115.6px">    <span class="k">this</span><span class="d">.</span>granteesView<span class="d">.</span>align <span class="p">=</span> Align<span class="d">.</span>Top<span class="d">;</span></div>
<div class="ln" style="top:1148.6px">29</div>
<div class="cl" style="top:1148.6px">    <span class="k">this</span><span class="d">.</span>granteesView<span class="d">.</span>height <span class="p">=</span> <span class="s">'35%'</span><span class="d">;</span></div>
<div class="ln" style="top:1181.6px">30</div>
<div class="cl" style="top:1181.6px">    <span class="k">this</span><span class="d">.</span>granteesView<span class="d">.</span>options<span class="d">.</span>gridLines <span class="p">=</span> <span class="k">false</span><span class="d">;</span></div>
<div class="ln" style="top:1214.6px">31</div>
<div class="cl" style="top:1214.6px">    <span class="k">this</span><span class="d">.</span>granteesView<span class="d">.</span>options<span class="d">.</span>header <span class="p">=</span> <span class="k">false</span><span class="d">;</span></div>
<div class="ln" style="top:1247.6px">32</div>
<div class="cl" style="top:1247.6px">    <span class="k">this</span><span class="d">.</span>granteesView<span class="d">.</span>options<span class="d">.</span>selectDelayed <span class="p">=</span> <span class="k">false</span><span class="d">;</span></div>
<div class="ln" style="top:1280.6px">33</div>
<div class="cl" style="top:1280.6px">    <span class="k">this</span><span class="d">.</span>granteesView<span class="d">.</span>options<span class="d">.</span>multiSelect <span class="p">=</span> <span class="k">false</span><span class="d">;</span></div>
<div class="ln" style="top:1313.6px">34</div>
<div class="cl" style="top:1313.6px">    <span class="k">this</span><span class="d">.</span>granteesView<span class="d">.</span>options<span class="d">.</span><span class="k">delete</span> <span class="p">=</span> <span class="k">false</span><span class="d">;</span></div>
<div class="ln" style="top:1346.6px">35</div>
<div class="cl" style="top:1346.6px">    <span class="k">this</span><span class="d">.</span>granteesView<span class="d">.</span>options<span class="d">.</span>remove <span class="p">=</span> <span class="k">true</span><span class="d">;</span></div>
<div class="ln" style="top:1379.6px">36</div>
<div class="cl" style="top:1379.6px">    <span class="k">this</span><span class="d">.</span>granteesView<span class="d">.</span>select<span class="p">(</span><span class="p">(</span>grantee<span class="p">)</span> <span class="p">=</span><span class="p">&gt;</span> <span class="k">this</span><span class="d">.</span>_fillGranteeRights<span class="p">(</span>grantee<span class="p">)</span><span class="p">)</span><span class="d">;</span></div>
<div class="ln" style="top:1412.6px">37</div>
<div class="cl" style="top:1412.6px">    <span class="k">this</span><span class="d">.</span>granteesView<span class="d">.</span><span class="k">delete</span><span class="p">(</span><span class="p">(</span>grantees<span class="p">)</span> <span class="p">=</span><span class="p">&gt;</span> <span class="k">this</span><span class="d">.</span>_deleteGranteeRights<span class="p">(</span>grantees<span class="p">)</span><span class="p">)</span><span class="d">;</span></div>
<div class="ln" style="top:1445.6px">38</div>
<div class="cl" style="top:1445.6px">    <span class="k">this</span><span class="d">.</span>granteesView<span class="d">.</span>fields <span class="p">=</span> <span class="p">[</span>SecurityView<span class="d">.</span>_GranteeFullName<span class="p">]</span><span class="d">;</span></div>
<div class="ln" style="top:1478.6px">39</div>
<div class="ln" style="top:1511.6px">40</div>
<div class="cl" style="top:1511.6px">    <span class="k">this</span><span class="d">.</span>granteesButtonsRow <span class="p">=</span> <span class="k">new</span> View<span class="p">(</span><span class="k">this</span><span class="p">)</span><span class="d">;</span></div>
<div class="ln" style="top:1544.6px">41</div>
<div class="cl" style="top:1544.6px">    <span class="k">this</span><span class="d">.</span>granteesButtonsRow<span class="d">.</span>align <span class="p">=</span> Align<span class="d">.</span>Top<span class="d">;</span></div>
<div class="ln" style="top:1577.6px">42</div>
<div class="cl" style="top:1577.6px">    <span class="k">this</span><span class="d">.</span>granteesButtonsRow<span class="d">.</span>height <span class="p">=</span> <span class="n">25</span><span class="d">;</span></div>
<div class="ln" style="top:1610.6px">43</div>
<div class="a" style="left:652px;top:1680px;width:82px;height:50px;border-left:1px solid #a0a0a0;border-right:1px solid #a0a0a0;background:#fff"></div>
<div class="a" style="left:734px;top:1680px;width:102.2px;height:41.5px;border:1px solid #a0a0a0;border-left:none;border-top:none;background:#f0f0f0"></div>
<div class="t" style="left:659.4px;top:1690.2px;font-size:29px;letter-spacing:-1.257px">Code</div>
<div class="t" style="left:740.4px;top:1688px;font-size:29px;letter-spacing:-0.462px">Design</div>
<div class="a" style="left:636px;top:1674.8px;width:106.1px;height:52.7px;border:4.8px solid #ec1c24;border-radius:11.5px"></div>
</body></html>
